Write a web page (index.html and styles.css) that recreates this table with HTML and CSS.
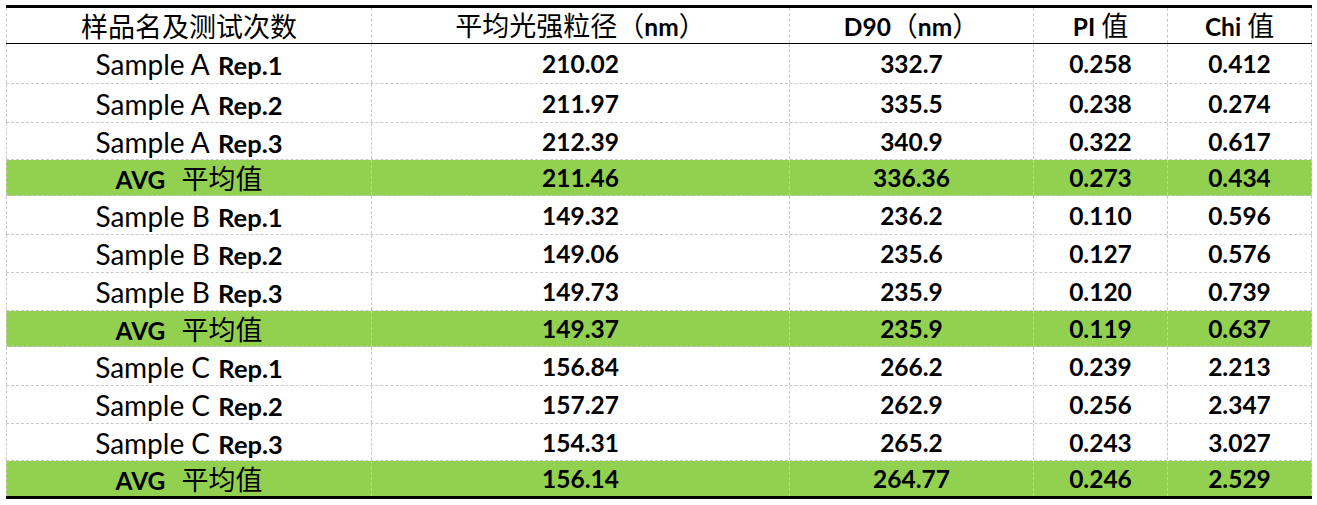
FILE: index.html
```html
<!DOCTYPE html>
<html lang="zh-CN">
<head>
<meta charset="utf-8">
<title>粒径测试结果</title>
<link rel="stylesheet" href="styles.css">
</head>
<body>
<div class="page">
  <div class="sheet">
    <div class="row head">
      <div class="cell"><span class="cjk">样品名及测试次数</span></div>
      <div class="cell"><span class="lbl"><span class="cjk">平均光强粒径（</span><b>nm</b><span class="cjk">）</span></span></div>
      <div class="cell"><span class="lbl"><b>D90</b><span class="cjk">（</span><b>nm</b><span class="cjk">）</span></span></div>
      <div class="cell"><span class="lbl"><b>PI</b><span class="cjk sp">值</span></span></div>
      <div class="cell"><span class="lbl"><b>Chi</b><span class="cjk sp">值</span></span></div>
    </div>

    <div class="row h40">
      <div class="cell"><span class="lbl"><span class="reg">Sample A</span>&nbsp;<b class="rep">Rep.1</b></span></div>
      <div class="cell"><b>210.02</b></div><div class="cell"><b>332.7</b></div><div class="cell"><b>0.258</b></div><div class="cell"><b>0.412</b></div>
    </div>
    <div class="row h39">
      <div class="cell"><span class="lbl"><span class="reg">Sample A</span>&nbsp;<b class="rep">Rep.2</b></span></div>
      <div class="cell"><b>211.97</b></div><div class="cell"><b>335.5</b></div><div class="cell"><b>0.238</b></div><div class="cell"><b>0.274</b></div>
    </div>
    <div class="row h37">
      <div class="cell"><span class="lbl"><span class="reg">Sample A</span>&nbsp;<b class="rep">Rep.3</b></span></div>
      <div class="cell"><b>212.39</b></div><div class="cell"><b>340.9</b></div><div class="cell"><b>0.322</b></div><div class="cell"><b>0.617</b></div>
    </div>
    <div class="row avg h36">
      <div class="cell"><span class="lbl"><b>AVG</b><span class="cjk gap">平均值</span></span></div>
      <div class="cell"><b>211.46</b></div><div class="cell"><b>336.36</b></div><div class="cell"><b>0.273</b></div><div class="cell"><b>0.434</b></div>
    </div>

    <div class="row h39">
      <div class="cell"><span class="lbl"><span class="reg">Sample B</span>&nbsp;<b class="rep">Rep.1</b></span></div>
      <div class="cell"><b>149.32</b></div><div class="cell"><b>236.2</b></div><div class="cell"><b>0.110</b></div><div class="cell"><b>0.596</b></div>
    </div>
    <div class="row h38">
      <div class="cell"><span class="lbl"><span class="reg">Sample B</span>&nbsp;<b class="rep">Rep.2</b></span></div>
      <div class="cell"><b>149.06</b></div><div class="cell"><b>235.6</b></div><div class="cell"><b>0.127</b></div><div class="cell"><b>0.576</b></div>
    </div>
    <div class="row h38">
      <div class="cell"><span class="lbl"><span class="reg">Sample B</span>&nbsp;<b class="rep">Rep.3</b></span></div>
      <div class="cell"><b>149.73</b></div><div class="cell"><b>235.9</b></div><div class="cell"><b>0.120</b></div><div class="cell"><b>0.739</b></div>
    </div>
    <div class="row avg h36">
      <div class="cell"><span class="lbl"><b>AVG</b><span class="cjk gap">平均值</span></span></div>
      <div class="cell"><b>149.37</b></div><div class="cell"><b>235.9</b></div><div class="cell"><b>0.119</b></div><div class="cell"><b>0.637</b></div>
    </div>

    <div class="row h39">
      <div class="cell"><span class="lbl"><span class="reg">Sample C</span>&nbsp;<b class="rep">Rep.1</b></span></div>
      <div class="cell"><b>156.84</b></div><div class="cell"><b>266.2</b></div><div class="cell"><b>0.239</b></div><div class="cell"><b>2.213</b></div>
    </div>
    <div class="row h38">
      <div class="cell"><span class="lbl"><span class="reg">Sample C</span>&nbsp;<b class="rep">Rep.2</b></span></div>
      <div class="cell"><b>157.27</b></div><div class="cell"><b>262.9</b></div><div class="cell"><b>0.256</b></div><div class="cell"><b>2.347</b></div>
    </div>
    <div class="row h37">
      <div class="cell"><span class="lbl"><span class="reg">Sample C</span>&nbsp;<b class="rep">Rep.3</b></span></div>
      <div class="cell"><b>154.31</b></div><div class="cell"><b>265.2</b></div><div class="cell"><b>0.243</b></div><div class="cell"><b>3.027</b></div>
    </div>
    <div class="row avg last h35">
      <div class="cell"><span class="lbl"><b>AVG</b><span class="cjk gap">平均值</span></span></div>
      <div class="cell"><b>156.14</b></div><div class="cell"><b>264.77</b></div><div class="cell"><b>0.246</b></div><div class="cell"><b>2.529</b></div>
    </div>
  </div>
</div>
</body>
</html>
```

FILE: styles.css
```css
html, body {
  margin: 0;
  padding: 0;
  background: #ffffff;
}

.page {
  padding: 5px 0 0 6px;
}

.sheet {
  width: 1306px;
  border-top: 3px solid #000000;
  border-bottom: 3px solid #000000;
  font-family: Lato, "Noto Sans", "Noto Sans CJK SC", sans-serif;
  font-size: 24.5px;
  color: #000000;
}

.row {
  display: grid;
  grid-template-columns: 366px 418px 244px 134px 144px;
  box-sizing: border-box;
  border-bottom: 1px dashed #c9c9c9;
}

.row.head {
  height: 36px;
  border-bottom: 1px solid #000000;
}

.row.last {
  border-bottom: none;
}

.h40 { height: 40px; }
.h39 { height: 39px; }
.h38 { height: 38px; }
.h37 { height: 37px; }
.h36 { height: 36px; }
.h35 { height: 35px; }

.avg {
  background: #92d050;
}

.cell {
  display: flex;
  align-items: center;
  justify-content: center;
  border-right: 1px dashed #c9c9c9;
  white-space: nowrap;
  line-height: 1;
  padding-top: 2px;
}

.head .cell {
  padding-top: 0;
}

.cell:first-child {
  border-left: 1px dashed #c9c9c9;
}

.cell b {
  font-weight: 700;
}

.lbl {
  display: inline-block;
}

.reg {
  font-weight: 400;
  font-size: 28px;
}

.cell b.rep {
  font-size: 25.5px;
  margin-left: 2px;
}

.cjk {
  font-family: "Noto Sans CJK SC", sans-serif;
  font-size: 27px;
  font-weight: 400;
}

.sp {
  margin-left: 6px;
}

.gap {
  margin-left: 16px;
}
```
